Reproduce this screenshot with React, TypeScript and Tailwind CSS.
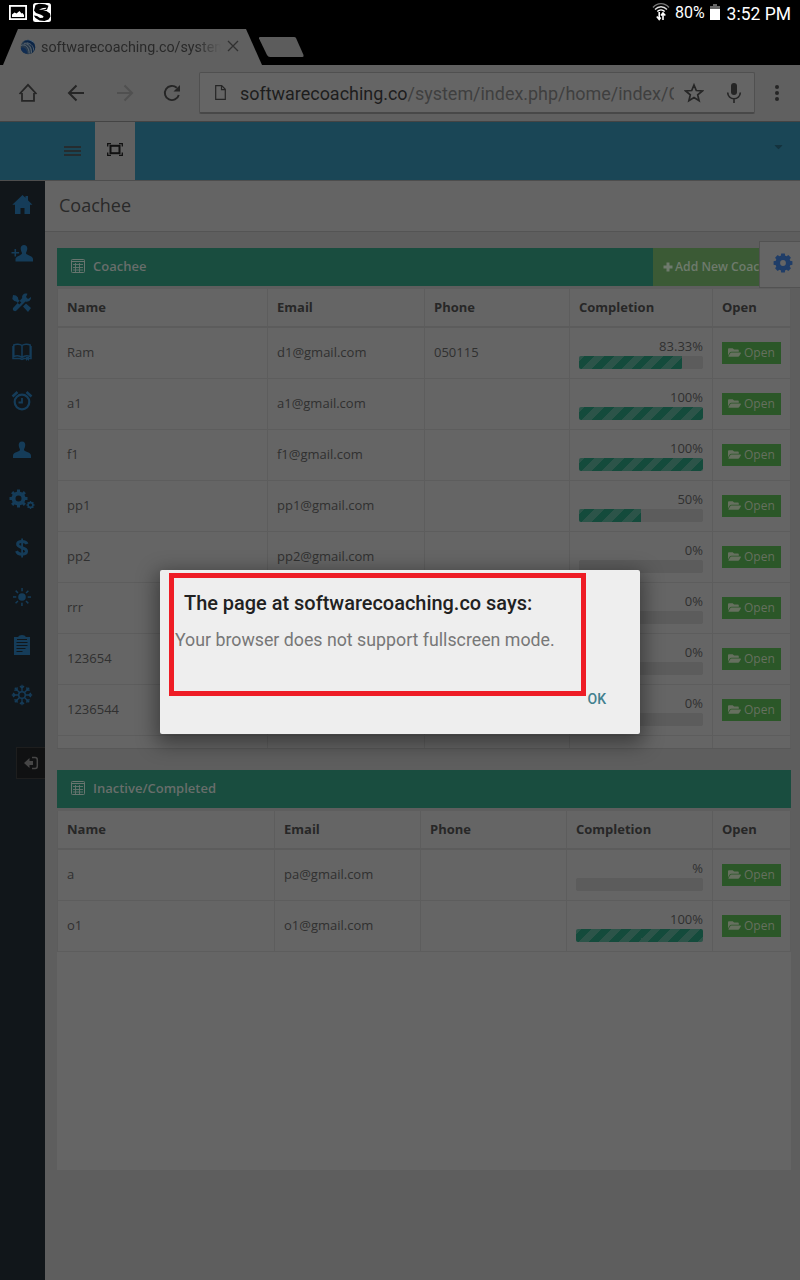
import type { ReactNode } from "react";
import { FaFolderOpen, FaCaretDown } from "react-icons/fa";

type Row = { name: string; email: string; phone: string; pct: string; value: number };

const active: Row[] = [
  { name: "Ram", email: "d1@gmail.com", phone: "050115", pct: "83.33%", value: 83.33 },
  { name: "a1", email: "a1@gmail.com", phone: "", pct: "100%", value: 100 },
  { name: "f1", email: "f1@gmail.com", phone: "", pct: "100%", value: 100 },
  { name: "pp1", email: "pp1@gmail.com", phone: "", pct: "50%", value: 50 },
  { name: "pp2", email: "pp2@gmail.com", phone: "", pct: "0%", value: 0 },
  { name: "rrr", email: "", phone: "", pct: "0%", value: 0 },
  { name: "123654", email: "", phone: "", pct: "0%", value: 0 },
  { name: "1236544", email: "", phone: "", pct: "0%", value: 0 },
];

const inactive: Row[] = [
  { name: "a", email: "pa@gmail.com", phone: "", pct: "%", value: 0 },
  { name: "o1", email: "o1@gmail.com", phone: "", pct: "100%", value: 100 },
];

function StatusBar() {
  return (
    <div className="flex h-[29px] items-start justify-between bg-black pr-[9px] pl-[9px] text-white">
      <div className="flex gap-[6px] pt-[3px]">
        <svg width="18" height="20" viewBox="0 0 18 20">
          <rect x="0.9" y="2.9" width="16.2" height="13.2" fill="none" stroke="#fff" strokeWidth="1.800" />
          <path d="M3 14v-2.500l2.500-2 2 1L10.500 8l2 2.500 1-.5L15 12v2z" fill="#fff" />
        </svg>
        <svg width="18" height="20" viewBox="0 0 18 20">
          <rect width="18" height="19" rx="2.500" fill="#fff" />
          <path d="M2.500 2L6 .8l6 .4 3.500 1.500-1.500 4-4 .8 3.500.5 3.500 2.500.5 3-2 3-4 1.500-5-.5L2.500 15 .8 12.500 4 13l3 2 3-.3.5-1.500-2.500-1.500L3 10 1 7.500z" fill="#000" />
          <path d="M6 6.500l4-1.500 3.500-.3-1 1.300-4 .8z" fill="#fff" />
        </svg>
      </div>
      <div className="flex">
        <svg width="18" height="20" viewBox="0 0 18 20" className="mt-[2px] mr-[5px]">
          <g fill="none" strokeWidth="1.400">
            <path d="M1 5.500C5.500 .3 12.500.3 17 5.500" stroke="#777" />
            <path d="M3 7.500C6.500 3.800 11.500 3.800 15 7.500" stroke="#ddd" />
            <path d="M5.300 9.500C7.500 7.300 10.500 7.300 12.700 9.500" stroke="#fff" />
          </g>
          <path d="M7.200 10v7M4.800 14.500l2.400 3 1.500-2M11 18v-6M9 13.500l2-2.500 2.300 2.500" fill="none" stroke="#fff" strokeWidth="1.600" />
        </svg>
        <span className="pt-[3px] text-[16px] leading-5">80%</span>
        <svg width="10" height="17" viewBox="0 0 10 17" className="mt-[4px] ml-[5px]">
          <path d="M0 2h3V0h4v2h3v3H0z" fill="#666" />
          <path d="M0 5h10v11H0z" fill="#fff" />
        </svg>
        <span className="ml-[7px] pt-[3px] text-[17.500px] leading-[22px]">3:52 PM</span>
      </div>
    </div>
  );
}

function TabStrip() {
  return (
    <div className="flex h-9 bg-black pl-[3px]">
      <div className="flex w-[259px] bg-[#606060] pl-[17px] [clip-path:polygon(0_100%,15px_0,243px_0,259px_100%)]">
        <svg width="16" height="16" viewBox="0 0 16 16" className="mt-[10px]">
          <circle cx="8" cy="8" r="7.300" fill="#27394c" />
          <path d="M3 3.500C6-.5 12 0 14.500 4 12 2.500 9 3 8 3.500 6 3 4.500 3 3 3.500z" fill="#50667a" />
          <path d="M3 4c4-2 8 1 9 6 .4 2 0 4-1 5l3.500-4c2-4-1-8.500-5-9.500S4 2 3 4z" fill="#0c2546" />
          <path d="M1 6.500c4-2 8 1.500 8.200 8M4 4.800c4-1 7.500 3 7.500 9M7 4c4 0 7 4 6.500 7.500" fill="none" stroke="#666f76" strokeWidth=".8" />
          <path d="M.8 9c3-1.500 6 1 6.500 5.500C4 14.500 1 12 .8 9z" fill="#102c52" />
        </svg>
        <span className="mt-[9px] ml-[5px] w-[180px] overflow-hidden text-[14.300px] leading-[18px] whitespace-nowrap text-[#292929] [mask-image:linear-gradient(to_right,#000_155px,transparent_180px)]">
          softwarecoaching.co/system
        </span>
        <svg width="12" height="12" viewBox="0 0 12 12" className="mt-[11px] ml-[6px]">
          <path d="M1 1l10 10M11 1L1 11" stroke="#303030" strokeWidth="1.300" />
        </svg>
      </div>
      <svg width="48" height="36" viewBox="0 0 48 36" className="-ml-[4px]">
        <path d="M2 8h34q1.500 0 2 1l7.500 17q.5 2-1 2H12q-2 0-3-2L1 9.500Q.5 8 2 8z" fill="#5c5c5c" />
      </svg>
    </div>
  );
}

function Toolbar() {
  return (
    <div className="flex h-[57px] items-center border-b border-[#444] bg-[#606060] pl-[18px] text-[#252525]">
      <svg width="20" height="20" viewBox="0 0 20 20" fill="none" stroke="currentColor" strokeWidth="1.800">
        <path d="M4 10v7.800h12V10M1.500 11L10 1.800 18.500 11" />
      </svg>
      <svg width="18" height="18" viewBox="0 0 18 18" fill="none" stroke="currentColor" strokeWidth="2" className="ml-[29px]">
        <path d="M17 9H2M9.500 1.500L2 9l7.500 7.500" />
      </svg>
      <svg width="18" height="18" viewBox="0 0 18 18" fill="none" stroke="#505050" strokeWidth="2" className="ml-[31px]">
        <path d="M1 9h15M8.500 1.500L16 9l-7.500 7.500" />
      </svg>
      <svg width="18" height="18" viewBox="0 0 18 18" className="ml-[29px]">
        <path d="M15.800 11A7.100 7.100 0 1 1 13.800 3.800" fill="none" stroke="currentColor" strokeWidth="1.900" />
        <path d="M17 1v6.500h-6.500z" fill="currentColor" />
      </svg>
      <div className="ml-[18px] flex h-[42px] w-[556px] items-center rounded-[2px] border border-b-2 border-[#505050] border-b-[#484848] bg-[#656565] pl-[15px]">
        <svg width="11" height="15" viewBox="0 0 11 15" fill="none" stroke="currentColor" strokeWidth="1.200">
          <path d="M.7.700h6l3.600 3.600v10H.7zM6.500.700v4h4" />
        </svg>
        <span className="mt-[3px] ml-[14px] w-[434px] overflow-hidden text-[17.950px] leading-6 whitespace-nowrap text-[#3f3f3f]">
          <span className="text-[#1d1d1d]">softwarecoaching.co</span>/system/index.php/home/index/C
        </span>
        <svg width="20" height="20" viewBox="0 0 20 20" fill="none" stroke="currentColor" strokeWidth="1.700" className="ml-[10px]">
          <path d="M10 2l2.300 5.500 6 .5-4.600 3.900 1.400 5.800L10 14.600l-5.100 3.100 1.400-5.800L1.700 8l6-.5z" />
        </svg>
        <svg width="16" height="20" viewBox="0 0 16 20" className="ml-[22px]">
          <rect x="5" y="0" width="6" height="12" rx="3" fill="currentColor" />
          <path d="M1.700 9.500a6.300 6.300 0 0 0 12.600 0M8 16v4" fill="none" stroke="currentColor" strokeWidth="1.600" />
        </svg>
      </div>
      <div className="ml-[20px] flex flex-col gap-[2px]">
        <i className="size-1 rounded-full bg-[#252525]" />
        <i className="size-1 rounded-full bg-[#252525]" />
        <i className="size-1 rounded-full bg-[#252525]" />
      </div>
    </div>
  );
}

function AppBar() {
  return (
    <div className="flex h-[59px] border-b border-[#4d4d4d] bg-[#1a4656]">
      <div className="flex w-[95px] justify-end pr-[14px]">
        <div className="mt-[24px] flex w-[17px] flex-col gap-[2px]">
          <i className="h-[2px] bg-[#252c2f]" />
          <i className="h-[2px] bg-[#252c2f]" />
          <i className="h-[2px] bg-[#252c2f]" />
        </div>
      </div>
      <div className="flex w-10 justify-center bg-[#616161] pt-[21px]">
        <svg width="16" height="13" viewBox="0 0 16 13" fill="none" stroke="#111">
          <path d="M.7 3.500V.700H4M12 .7h3.300v2.800M15.300 9.500v2.800H12M4 12.300H.7V9.500" strokeWidth="1.300" />
          <rect x="3.500" y="2.800" width="9" height="7.400" strokeWidth="2" />
        </svg>
      </div>
      <div className="flex flex-1 justify-end pr-[15px]">
        <FaCaretDown size={13} color="#14333e" className="mt-[18px]" />
      </div>
    </div>
  );
}

function SideIcon({ children }: { children: ReactNode }) {
  return (
    <div className="flex h-[49px] items-center justify-center text-[#153c59]">
      <svg width="26" height="22" viewBox="0 0 26 22" fill="currentColor">
        {children}
      </svg>
    </div>
  );
}

const rays = [0, 45, 90, 135, 180, 225, 270, 315];

function Sidebar() {
  return (
    <div className="flex w-[45px] flex-col bg-[#11161a]">
      <div className="-mt-px flex w-[43px] flex-col">
        <SideIcon>
          <path d="M13.500 1L3.300 10.800h2.700V20h5.500v-6h4v6h5.500v-9.200h2.500L19 6.200V2h-2.500v1.800z" />
        </SideIcon>
        <SideIcon>
          <path d="M5.500 6v3h-3v1.500h3v3h1.600v-3h3V9h-3V6zM15 2c2.400 0 3.700 2 3.200 4.500-.3 2-1.200 2.500-1.200 4 1 2 7 2.200 7 5.500v2.500H6.500V16c0-2.500 5.500-3.500 6.500-5.500 0-1.500-1-2-1.200-4C11.300 4 12.600 2 15 2z" />
        </SideIcon>
        <SideIcon>
          <path d="M4 3l3 .5 2 2 .3 2 3 3-2 2-3-3-2-.5-2-2zM14 14.500l3-3 5 4.500-3 4zM22 5l-3 2-2-2 1.500-3.200c-3-1-6 1-5.300 4.200L4.500 15.500c-2 2 1 5 3 3L16.500 9.500c3 1 6-1.500 5.500-4.500z" />
        </SideIcon>
        <SideIcon>
          <path d="M13 4.500v12M13 4.500C11 3 7 2.800 4.800 4v11.500c2.500-1 6.200-.7 8.200 1 2-1.700 5.700-2 8.200-1V4C19 2.800 15 3 13 4.500zM4 5v12.500h7l2 1 2-1h7V5" fill="none" stroke="currentColor" strokeWidth="1.500" />
          <path d="M17 16h3v4l-1.500-1.500L17 20z" />
        </SideIcon>
        <SideIcon>
          <circle cx="13" cy="12" r="7.300" fill="none" stroke="currentColor" strokeWidth="2.200" />
          <path d="M13 8v4.500h-3.500" fill="none" stroke="currentColor" strokeWidth="1.800" />
          <path d="M3.500 6.500L8.500 2M22.500 6.500L17.500 2" fill="none" stroke="currentColor" strokeWidth="2.600" />
        </SideIcon>
        <SideIcon>
          <path d="M13 2.500c2.400 0 3.700 2 3.200 4.500-.3 2-1.200 2.500-1.200 4 1 2 7 2.200 7 5.500v2.500H4v-2.500c0-3.300 6-3.500 7-5.500 0-1.500-1-2-1.200-4C9.300 4.500 10.600 2.500 13 2.500z" />
        </SideIcon>
        <SideIcon>
          <circle cx="9.500" cy="10.500" r="5" fill="none" stroke="currentColor" strokeWidth="4" />
          {rays.map((a) => (
            <rect key={a} x="8" y="1.500" width="3" height="4" transform={`rotate(${a} 9.500 10.500)`} />
          ))}
          <circle cx="21.500" cy="17" r="2.400" fill="none" stroke="currentColor" strokeWidth="1.600" />
          {rays.map((a) => (
            <rect key={`s${a}`} x="20.800" y="13" width="1.400" height="2" transform={`rotate(${a} 21.500 17)`} />
          ))}
        </SideIcon>
        <SideIcon>
          <path d="M18 7C17 4 9 3.500 8.600 7c-.4 4.500 9 3 9 7.300-.2 4-8.800 3.800-10-.3" fill="none" stroke="currentColor" strokeWidth="3" />
          <path d="M12.200 1.500h1.800v19h-1.800z" />
        </SideIcon>
        <SideIcon>
          <circle cx="13" cy="11" r="3.800" />
          {rays.map((a) => (
            <rect key={a} x="12.300" y="2" width="1.500" height="3.300" transform={`rotate(${a} 13 11)`} />
          ))}
        </SideIcon>
        <SideIcon>
          <path d="M5 2h4Q10 0 13 0t4 2h4v18H5z" />
          <path d="M8 4.500h10M7.500 7.500h11M7.500 10.500h11M7.500 13.500h9M7.500 16.500h6" stroke="#11161a" strokeWidth="1.200" />
        </SideIcon>
        <SideIcon>
          <circle cx="13" cy="11" r="3.300" fill="none" stroke="currentColor" strokeWidth="1.500" />
          {rays.map((a) => (
            <path key={a} d="M13 7.500V.8M11 2l2 2.300L15 2" fill="none" stroke="currentColor" strokeWidth="1.300" transform={`rotate(${a} 13 11)`} />
          ))}
        </SideIcon>
      </div>
      <div className="mt-[28px] ml-[16px] flex h-8 items-center justify-center border border-r-0 border-[#1e1e1e] bg-[#101112]">
        <svg width="15" height="14" viewBox="0 0 15 14">
          <path d="M0 7l5.500-5v3H9v4H5.500v3z" fill="#464646" />
          <path d="M8 1.500h3.200Q13.300 1.500 13.300 4v6q0 2.500-2.100 2.500H8" fill="none" stroke="#464646" strokeWidth="1.500" />
        </svg>
      </div>
    </div>
  );
}

function PanelHeader({ title, action }: { title: string; action?: ReactNode }) {
  return (
    <div className="flex h-[38px] items-center bg-[#194d3f] pl-[14px] text-[13px] font-semibold text-[#686e6b]">
      <svg width="14" height="14" viewBox="0 0 14 14" fill="none" stroke="#68756f" className="-mt-[2px]">
        <rect x=".5" y=".5" width="13" height="13" rx=".8" strokeWidth="1" />
        <path d="M1 2.500h12" strokeWidth="1" />
        <path d="M2 5.500h10M2 8.500h10M2 11h10M4.500 4v9M8.500 4v9" strokeWidth=".9" />
      </svg>
      <span className="ml-[8px]">{title}</span>
      {action}
    </div>
  );
}

function Progress({ value }: { value: number }) {
  return (
    <div className="h-[13px] overflow-hidden rounded-[2px] bg-[#5c5c5c]">
      <div
        className="h-full bg-[repeating-linear-gradient(135deg,#2c5449_0px,#2c5449_3.536px,#144b3c_3.536px,#144b3c_10.607px,#2c5449_10.607px,#2c5449_14.142px)]"
        style={{ width: `${value}%` }}
      />
    </div>
  );
}

const cell = "border-r border-[#5d5d5d] px-[9px]";

function Table({ rows, cols, trailing }: { rows: Row[]; cols: string; trailing?: boolean }) {
  return (
    <div className="border-t-3 border-[#5e5e5e] text-[13px] text-[#303030]">
      <div className="border-l border-[#5c5c5c]">
        <div className={`grid h-[39px] border-b-2 border-[#5c5c5c] font-bold text-[#272727] ${cols}`}>
          {["Name", "Email", "Phone", "Completion", "Open"].map((h) => (
            <div key={h} className={`${cell} pt-[9px] leading-[19px]`}>{h}</div>
          ))}
        </div>
        {rows.map((r) => (
          <div key={r.name} className={`grid h-[51px] border-b border-[#5d5d5d] ${cols}`}>
            <div className={`${cell} pt-[15px] leading-[19px]`}>{r.name}</div>
            <div className={`${cell} pt-[15px] leading-[19px]`}>{r.email}</div>
            <div className={`${cell} pt-[15px] leading-[19px]`}>{r.phone}</div>
            <div className={`${cell} pt-[9px]`}>
              <div className="text-right leading-[19px]">{r.pct}</div>
              <Progress value={r.value} />
            </div>
            <div className={`${cell} pt-[14px]`}>
              <div className="flex h-[22px] w-[59px] items-center bg-[#2b5728] pl-[6px] text-[12px] text-[#66705f]">
                <FaFolderOpen size={13} className="-mt-px" />
                <span className="ml-[3px]">Open</span>
              </div>
            </div>
          </div>
        ))}
        {trailing && (
          <div className={`grid h-3 ${cols}`}>
            {[0, 1, 2, 3, 4].map((i) => (
              <div key={i} className={cell} />
            ))}
          </div>
        )}
      </div>
    </div>
  );
}

function Dialog() {
  return (
    <div className="absolute top-[570px] left-[160px] h-[164px] w-[480px] rounded-[2px] bg-[#eee] shadow-[0_6px_20px_4px_rgba(0,0,0,0.4)]">
      <div className="flex flex-col pt-[21px]">
        <h1 className="pl-[24px] text-[19.940px] leading-[26px] font-medium whitespace-nowrap text-[#212121]">The page at softwarecoaching.co says:</h1>
        <p className="mt-[11px] pl-[15px] text-[17.780px] leading-6 whitespace-nowrap text-[#777]">Your browser does not support fullscreen mode.</p>
        <button className="mt-[37px] mr-[34px] self-end text-[14px] leading-5 font-medium text-[#42808f]">OK</button>
      </div>
      <div className="absolute top-[3px] left-[9px] h-[123px] w-[417px] border-5 border-[#ee1c25]" />
    </div>
  );
}

export default function App() {
  return (
    <div className="relative flex h-[1280px] w-[800px] flex-col overflow-hidden bg-[#5e5e5e] font-['Roboto',sans-serif]">
      <StatusBar />
      <TabStrip />
      <Toolbar />
      <AppBar />
      <div className="flex flex-1 font-['Open_Sans',sans-serif]">
        <Sidebar />
        <main className="flex w-[755px] flex-col">
          <div className="h-[51px] border-b border-[#545454] bg-[#646464] pt-[12px] pl-[14px] text-[18px] leading-[25px] text-[#292929]">Coachee</div>
          <div className="flex flex-col pt-[16px] pr-[9px] pl-[12px]">
            <section className="h-[501px] border-b border-[#585858] bg-[#656565]">
              <PanelHeader
                title="Coachee"
                action={
                  <div className="ml-auto flex h-full w-[138px] items-center overflow-hidden bg-[#3b5a35] pl-[10px] text-[12px] whitespace-nowrap text-[#6f7a6d]">
                    <svg width="10" height="10" viewBox="0 0 10 10" className="-mt-px shrink-0">
                      <path d="M3.500.500h3v3h3v3h-3v3h-3v-3h-3v-3h3z" fill="currentColor" />
                    </svg>
                    <span className="ml-[2px] text-[12.200px]">Add New Coachee</span>
                  </div>
                }
              />
              <Table rows={active} cols="grid-cols-[210px_157px_145px_143px_78px]" trailing />
            </section>
            <section className="mt-[21px] h-[400px] bg-[#656565]">
              <PanelHeader title="Inactive/Completed" />
              <Table rows={inactive} cols="grid-cols-[217px_146px_146px_146px_78px]" />
            </section>
          </div>
        </main>
      </div>
      <div className="absolute top-[241px] right-0 flex h-[47px] w-[41px] items-center border border-r-0 border-[#525252] bg-[#656565] pl-[13px]">
        <svg width="20" height="20" viewBox="0 0 20 20" fill="#1f3d68" className="-mt-[4px]">
          <circle cx="10" cy="10" r="5.200" fill="none" stroke="#1f3d68" strokeWidth="4.600" />
          {rays.map((a) => (
            <path key={a} d="M7.600 4L8.200.600h3.600L12.400 4z" transform={`rotate(${a} 10 10)`} />
          ))}
        </svg>
      </div>
      <Dialog />
    </div>
  );
}
